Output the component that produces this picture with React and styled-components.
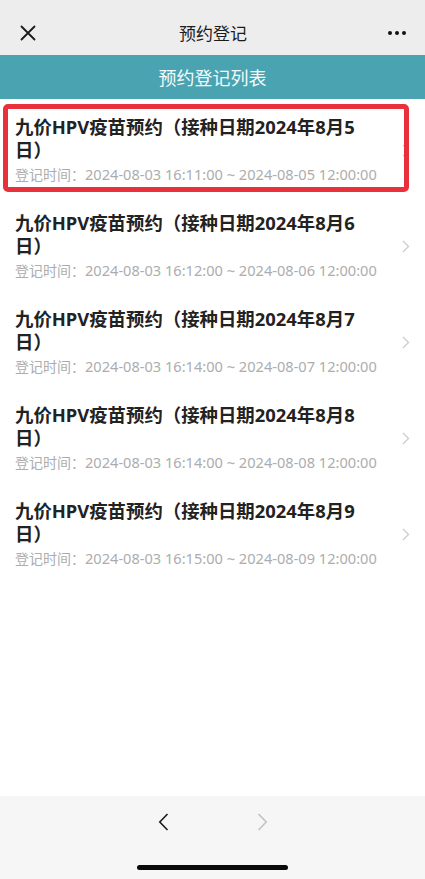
import React from "react";
import styled, { createGlobalStyle } from "styled-components";

const records = [
  { id: 1, day: 5, start: "16:11:00", marked: true },
  { id: 2, day: 6, start: "16:12:00" },
  { id: 3, day: 7, start: "16:14:00" },
  { id: 4, day: 8, start: "16:14:00" },
  { id: 5, day: 9, start: "16:15:00" },
];

const App = () => {
  return (
    <>
      <GlobalStyle />
      <StPage>
        <StNavBar>
          <StNavIcon>
            <svg width="16" height="16" viewBox="0 0 16 16">
              <path
                d="M1.5 1.5 L14.5 14.5 M14.5 1.5 L1.5 14.5"
                stroke="#1a1a1a"
                strokeWidth="1.8"
                strokeLinecap="round"
              />
            </svg>
          </StNavIcon>
          <StNavTitle>预约登记</StNavTitle>
          <StNavIcon align="end">
            <StDots>
              <span />
              <span />
              <span />
            </StDots>
          </StNavIcon>
        </StNavBar>
        <StBanner>预约登记列表</StBanner>
        <StList>
          {records.map((item) => (
            <StItem key={item.id} marked={item.marked}>
              <StItemText>
                <StItemTitle>
                  九价HPV疫苗预约（接种日期2024年8月{item.day}日）
                </StItemTitle>
                <StItemTime>
                  <span>登记时间：</span>
                  2024-08-03 {item.start} ~ 2024-08-0{item.day} 12:00:00
                </StItemTime>
              </StItemText>
              <StArrow>
                <svg width="8" height="13" viewBox="0 0 8 13">
                  <path
                    d="M1 1 L6.5 6.5 L1 12"
                    fill="none"
                    stroke="#c9c9c9"
                    strokeWidth="1.2"
                  />
                </svg>
              </StArrow>
            </StItem>
          ))}
        </StList>
        <StToolbar>
          <StToolRow>
            <StToolButton>
              <svg width="11" height="18" viewBox="0 0 11 18">
                <path
                  d="M9.5 1 L1.8 9 L9.5 17"
                  fill="none"
                  stroke="#1a1a1a"
                  strokeWidth="1.6"
                />
              </svg>
            </StToolButton>
            <StToolButton>
              <svg width="11" height="18" viewBox="0 0 11 18">
                <path
                  d="M1.5 1 L9.2 9 L1.5 17"
                  fill="none"
                  stroke="#c2c2c2"
                  strokeWidth="1.6"
                />
              </svg>
            </StToolButton>
          </StToolRow>
          <StHomeBar />
        </StToolbar>
      </StPage>
    </>
  );
};

export default App;

const GlobalStyle = createGlobalStyle`
  body {
    margin: 0;
    background: #fff;
    font-family: "Noto Sans", "Noto Sans CJK SC", sans-serif;
  }
`;

const StPage = styled.div`
  display: flex;
  flex-direction: column;
  min-height: 879px;
  background: #fff;
`;

const StNavBar = styled.div`
  height: 55px;
  background: #ededed;
  display: grid;
  grid-template-columns: 80px 1fr 80px;
  align-items: center;
  padding: 0 19px 0 20px;
  padding-top: 10px;
  box-sizing: border-box;
`;

const StNavIcon = styled.div`
  display: flex;
  justify-content: ${({ align }) => (align === "end" ? "flex-end" : "flex-start")};
  align-items: center;
`;

const StNavTitle = styled.div`
  text-align: center;
  font-size: 17px;
  color: #1c1c1c;
  font-family: "Noto Sans CJK SC", sans-serif;
`;

const StDots = styled.div`
  display: flex;
  gap: 3px;
  span {
    width: 4px;
    height: 4px;
    border-radius: 50%;
    background: #111;
  }
`;

const StBanner = styled.div`
  height: 44px;
  background: #4aa3b1;
  color: #f4fbfb;
  font-size: 18px;
  display: flex;
  align-items: center;
  justify-content: center;
  font-family: "Noto Sans CJK SC", sans-serif;
`;

const StList = styled.div`
  flex: 1;
  padding-top: 3px;
`;

const StItem = styled.div`
  position: relative;
  display: flex;
  align-items: center;
  padding: 13px 16px 13px 15px;
  height: 96px;
  box-sizing: border-box;

  &::after {
    content: "";
    display: ${({ marked }) => (marked ? "block" : "none")};
    position: absolute;
    left: 3px;
    right: 16px;
    top: 2px;
    bottom: 6px;
    border: 5px solid #e8313a;
    border-radius: 5px;
    pointer-events: none;
  }
`;

const StItemText = styled.div`
  flex: 1;
  min-width: 0;
`;

const StItemTitle = styled.div`
  width: 350px;
  font-size: 18.4px;
  line-height: 23px;
  font-weight: 700;
  color: #222;
`;

const StItemTime = styled.div`
  margin-top: 3px;
  font-size: 14.6px;
  line-height: 20px;
  color: #adadad;
  white-space: nowrap;

  span {
    font-size: 14px;
  }
`;

const StArrow = styled.div`
  display: flex;
  align-items: center;
  margin-right: -1px;
`;

const StToolbar = styled.div`
  height: 83px;
  background: #f6f6f6;
  display: flex;
  flex-direction: column;
  align-items: center;
`;

const StToolRow = styled.div`
  display: flex;
  gap: 88px;
  padding-top: 17px;
`;

const StToolButton = styled.div`
  width: 11px;
  height: 18px;
  display: flex;
`;

const StHomeBar = styled.div`
  margin-top: 34px;
  width: 151px;
  height: 5px;
  border-radius: 3px;
  background: #0a0a0a;
`;
